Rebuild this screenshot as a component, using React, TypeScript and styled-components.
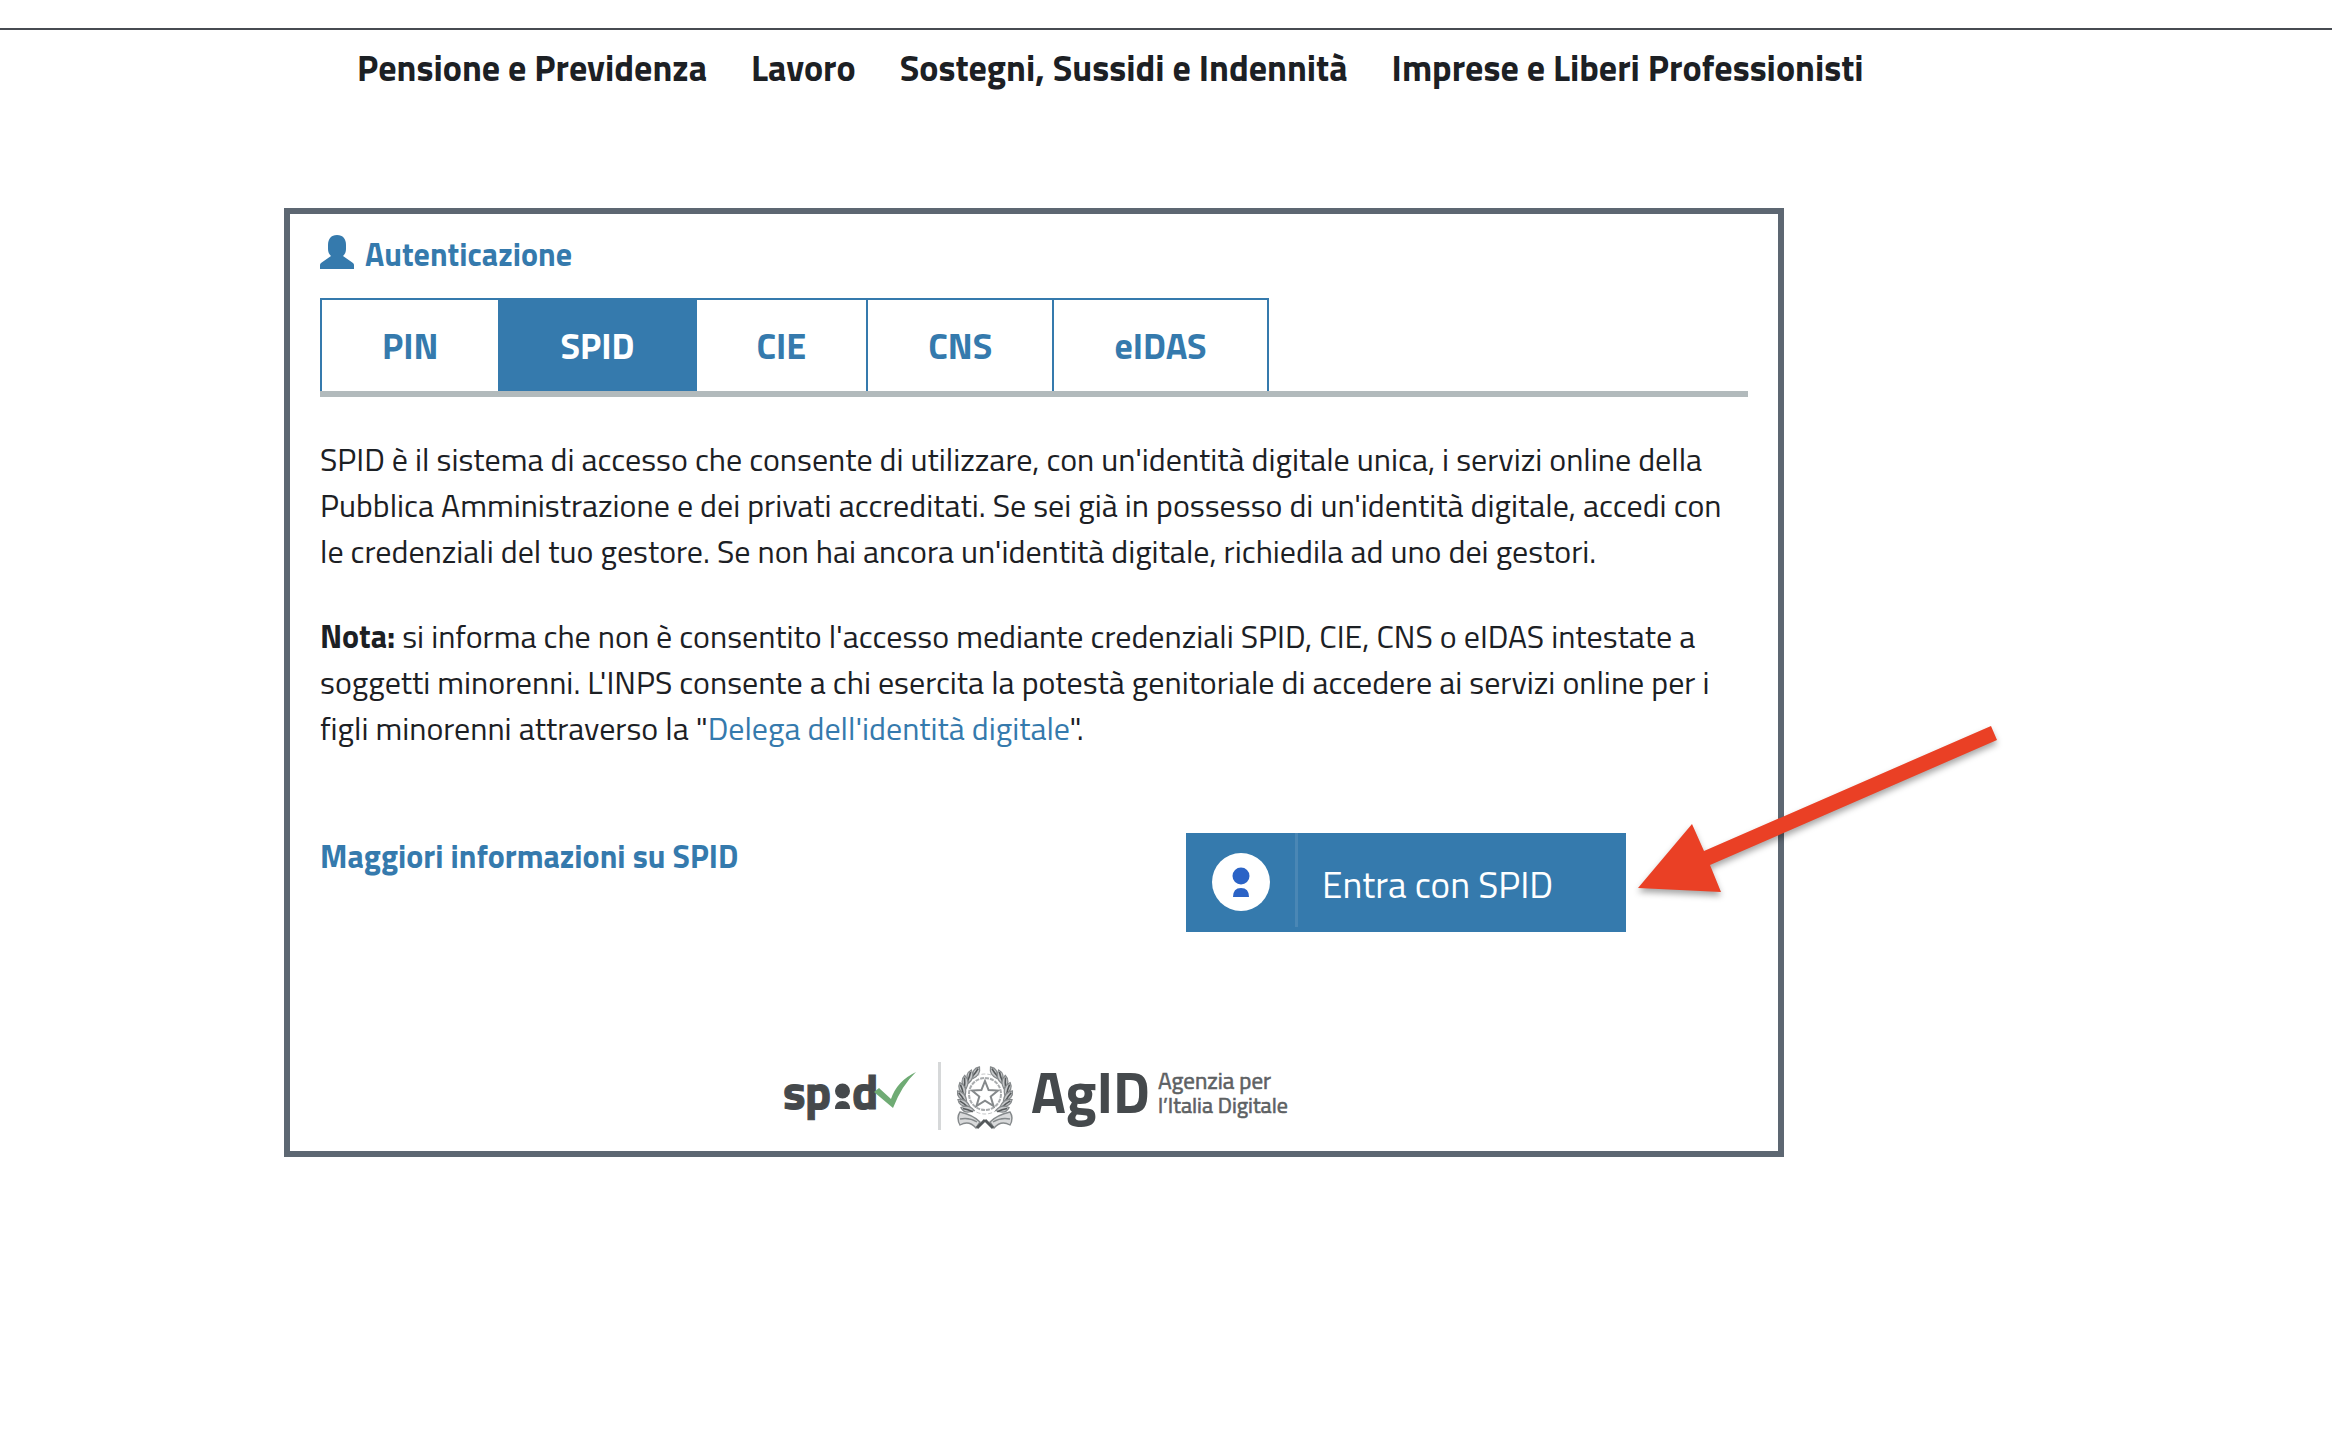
import React, { useState } from "react";
import styled, { createGlobalStyle } from "styled-components";

const blue = "#357aad";
const ink = "#1c2024";
const logoInk = "#45494c";

const GlobalStyle = createGlobalStyle`
  *, *::before, *::after { box-sizing: border-box; }
  body {
    margin: 0;
    background: #fff;
    color: ${ink};
    font: 400 32px/46px "Titillium Web", Lato, Roboto, sans-serif;
  }
`;

const Page = styled.div`
  position: relative;
  padding-top: 28px;
`;

const Nav = styled.nav`
  display: flex;
  flex-wrap: wrap;
  gap: 0 44px;
  padding: 11px 357px 0;
  border-top: 2px solid #474b51;
`;

const NavLink = styled.a`
  color: ${ink};
  font-size: 36px;
  line-height: 54px;
  font-weight: 700;
  text-decoration: none;
  white-space: nowrap;
`;

const Panel = styled.main`
  position: relative;
  max-width: 1500px;
  margin: 113px 284px 0;
  padding: 17px 30px 21px;
  border: 6px solid #5d6772;
`;

const Heading = styled.h1`
  display: flex;
  align-items: flex-start;
  gap: 11px;
  margin: 0 0 21px;
  color: ${blue};
  font-size: 32px;
  line-height: 46px;
  font-weight: 700;
`;

const UserIcon = styled.svg`
  width: 34px;
  height: 34px;
  margin-top: 4px;
  fill: currentColor;
`;

const Tabs = styled.div`
  display: flex;
  border-bottom: 6px solid #b2babc;
`;

const Tab = styled.button<{ $active: boolean }>`
  height: 93px;
  padding: 0 60px;
  border: 2px solid ${blue};
  border-width: 2px 2px 0 0;
  background: ${p => (p.$active ? blue : "#fff")};
  color: ${p => (p.$active ? "#fff" : blue)};
  font: inherit;
  font-size: 36px;
  font-weight: 700;
  cursor: pointer;

  &:first-child {
    border-left-width: 2px;
  }
`;

const Paragraph = styled.p`
  margin: 39px 0 0;
`;

const InlineLink = styled.a`
  color: ${blue};
  text-decoration: none;
`;

const Actions = styled.div`
  display: flex;
  justify-content: space-between;
  align-items: flex-start;
  margin-top: 82px;
  padding-right: 122px;
`;

const MoreLink = styled(InlineLink)`
  font-weight: 700;
`;

const SpidButton = styled.button`
  display: flex;
  align-items: flex-start;
  width: 440px;
  height: 99px;
  padding: 0;
  border: 0;
  background: ${blue};
  color: #fff;
  font: inherit;
  font-size: 37px;
  cursor: pointer;
`;

const IconCell = styled.span`
  display: flex;
  justify-content: center;
  width: 112px;
  height: 94px;
  padding-top: 20px;
  border-right: 3px solid #4a87b5;
`;

const ButtonLabel = styled.span`
  padding: 4px 0 0 24px;
  line-height: 95px;
`;

const Logos = styled.div`
  display: flex;
  justify-content: center;
  margin-top: 130px;
`;

const LogoArt = styled.svg`
  display: block;
  width: 500px;
  height: 68px;
  overflow: visible;
`;

const Arrow = styled.svg`
  position: absolute;
  top: 502px;
  left: 1340px;
  width: 380px;
  height: 190px;
  pointer-events: none;
  filter: drop-shadow(0 4px 3px rgba(0, 0, 0, 0.35));
`;

const sections = [
  "Pensione e Previdenza",
  "Lavoro",
  "Sostegni, Sussidi e Indennità",
  "Imprese e Liberi Professionisti",
];

const methods = ["PIN", "SPID", "CIE", "CNS", "eIDAS"];

const leafAngles = [-66, -48, -30, -12, 6, 24, 42];

function Emblem() {
  return (
    <g transform="translate(201 32)" stroke="#85898b" fill="none">
      <circle r="16" strokeWidth="2" strokeDasharray="4 1" opacity="0.7" />
      <circle r="20" strokeWidth="1" strokeDasharray="4 2" opacity="0.5" />
      {[1, -1].map(side => (
        <g key={side} transform={`scale(${side} 1)`}>
          {leafAngles.map(a => (
            <g key={a} transform={`rotate(${a})`}>
              <path d="M19 5 Q19 -4 27 -6 Q29 2 19 5Z" fill="#c6c8ca" strokeWidth="1.2" />
              <path d="M21 5 Q23 0 26 -4" stroke="#55595b" strokeWidth="1.6" />
            </g>
          ))}
          <path d="M5 28 Q12 21 25 18 Q29 24 25 31 Q16 26 9 34 Z" fill="#d9dadb" strokeWidth="1.4" />
          <path d="M0 26 L8 34" stroke="#55595b" strokeWidth="3" />
          <path d="M8 28 Q16 23 25 25" strokeWidth="1.4" />
        </g>
      ))}
      <path
        d="M0 -13 L3.6 -4 L13 -3.5 L5.7 2.6 L8.5 12 L0 6.6 L-8.5 12 L-5.7 2.6 L-13 -3.5 L-3.6 -4Z"
        fill="#fff"
        strokeWidth="2"
      />
    </g>
  );
}

function PartnerLogos() {
  return (
    <LogoArt viewBox="0 0 500 68" role="img" aria-label="SPID, AgID Agenzia per l'Italia Digitale">
      <g fill={logoInk} fontFamily='"Titillium Web", sans-serif'>
        <g fontSize="48" fontWeight="700" stroke={logoInk} strokeWidth="1">
          <text x="-1" y="47">s</text>
          <text x="21" y="47">p</text>
          <text x="68" y="47">d</text>
        </g>
        <circle cx="58.5" cy="29" r="7.5" />
        <path d="M51 47 Q51 39 58.5 39 Q66 39 66 47Z" />
        <text x="247" y="51" fontSize="58" fontWeight="700">AgID</text>
        <g fontWeight="400" fill="#5d6163" stroke="#5d6163" strokeWidth="0.6">
          <text x="374" y="27" fontSize="23">Agenzia per</text>
          <text x="374" y="51" fontSize="22">l’Italia Digitale</text>
        </g>
      </g>
      <path d="M90 30 L95 26 L107 37 Q113 19 132 10 Q118 23 109 46Z" fill="#6fab74" />
      <path d="M155.5 0 V68" stroke="#d6d8d9" strokeWidth="3" />
      <Emblem />
    </LogoArt>
  );
}

export default function App() {
  const [active, setActive] = useState("SPID");
  return (
    <Page>
      <GlobalStyle />
      <Nav>
        {sections.map(s => (
          <NavLink key={s} href="#">{s}</NavLink>
        ))}
      </Nav>
      <Panel>
        <Heading>
          <UserIcon viewBox="0 0 34 34" aria-hidden="true">
            <path d="M8 10 C8 4 11 0 17 0 C23 0 26 4 26 10 V14 C26 17 25 19 23 21 L33 28 Q34 29 34 30 V34 H0 V30 Q0 29 1 28 L11 21 C9 19 8 17 8 14Z" />
          </UserIcon>
          Autenticazione
        </Heading>
        <Tabs role="tablist">
          {methods.map(m => (
            <Tab
              key={m}
              type="button"
              role="tab"
              aria-selected={m === active}
              $active={m === active}
              onClick={() => setActive(m)}
            >
              {m}
            </Tab>
          ))}
        </Tabs>
        <Paragraph>
          SPID è il sistema di accesso che consente di utilizzare, con un'identità digitale unica, i
          servizi online della Pubblica Amministrazione e dei privati accreditati. Se sei già in
          possesso di un'identità digitale, accedi con le credenziali del tuo gestore. Se non hai
          ancora un'identità digitale, richiedila ad uno dei gestori.
        </Paragraph>
        <Paragraph>
          <strong>Nota:</strong> si informa che non è consentito l'accesso mediante credenziali SPID,
          CIE, CNS o eIDAS intestate a soggetti minorenni. L'INPS consente a chi esercita la potestà
          genitoriale di accedere ai servizi online per i figli minorenni attraverso la "
          <InlineLink href="#">Delega dell'identità digitale</InlineLink>".
        </Paragraph>
        <Actions>
          <MoreLink href="#">Maggiori informazioni su SPID</MoreLink>
          <SpidButton type="button">
            <IconCell>
              <svg width="58" height="58" viewBox="0 0 58 58" aria-hidden="true">
                <circle cx="29" cy="29" r="29" fill="#fff" />
                <circle cx="29" cy="23" r="8.5" fill="#2b63c6" />
                <path d="M21 44 Q21 35 29 35 Q37 35 37 44Z" fill="#2b63c6" />
              </svg>
            </IconCell>
            <ButtonLabel>Entra con SPID</ButtonLabel>
          </SpidButton>
        </Actions>
        <Logos>
          <PartnerLogos />
        </Logos>
        <Arrow viewBox="0 0 380 190" aria-hidden="true">
          <path
            d="M8 172 L62 108 L74 135 L361 10 L367 24 L80 149 L91 176Z"
            fill="#ea4025"
          />
        </Arrow>
      </Panel>
    </Page>
  );
}
